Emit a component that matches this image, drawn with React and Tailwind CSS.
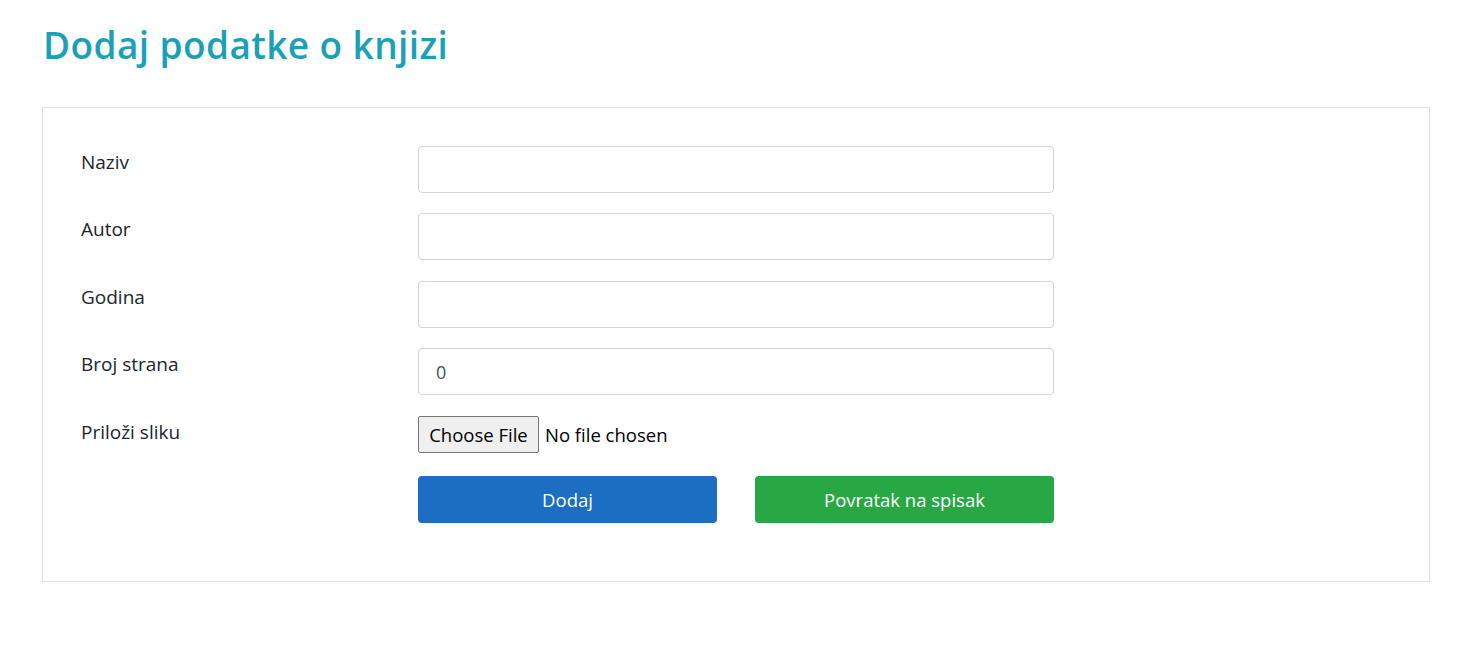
import React from "react";

const font = { fontFamily: '"Open Sans", "Noto Sans", sans-serif' };

function Field({ label, value, className = "" }) {
    return (
        <div className={`flex items-start ${className}`}>
            <label className="w-[337px] pt-[4px] text-[19px] leading-[24px] text-[#212529]">{label}</label>
            <input
                type="text"
                defaultValue={value}
                className="w-[636px] h-[47px] px-[17px] rounded-[4px] border border-[#ced4da] bg-white text-[18px] text-[#495057] outline-none"
            />
        </div>
    );
}

export default function App() {
    return (
        <div className="min-h-screen bg-white px-[42px] pt-[23px]" style={font}>
            <h1 className="text-[37px] leading-[44px] font-semibold text-[#1ba1b7] ml-[1px] tracking-[0.4px]">
                Dodaj podatke o knjizi
            </h1>
            <div className="mt-[40px] w-[1388px] h-[475px] border border-[#dee2e6] pt-[38px] pl-[38px]">
                <div className="flex flex-col">
                    <Field label="Naziv" />
                    <Field label="Autor" className="mt-[20px]" />
                    <Field label="Godina" className="mt-[21px]" />
                    <Field label="Broj strana" value="0" className="mt-[20px]" />
                    <div className="flex items-start mt-[21px]">
                        <label className="w-[337px] pt-[4px] text-[19px] leading-[24px] text-[#212529]">Priloži sliku</label>
                        <div className="flex items-center">
                            <button className="h-[37px] w-[121px] border border-[#767676] rounded-[2px] bg-[#efefef] text-[18.5px] text-black">
                                Choose File
                            </button>
                            <span className="ml-[6px] text-[18.5px] text-black">No file chosen</span>
                        </div>
                    </div>
                    <div className="flex items-start mt-[23px]">
                        <div className="w-[337px]" />
                        <div className="w-[636px] flex justify-between">
                            <button className="w-[299px] h-[47px] rounded-[4px] bg-[#1b6ec2] text-white text-[18.5px]">
                                Dodaj
                            </button>
                            <button className="w-[299px] h-[47px] rounded-[4px] bg-[#28a745] text-white text-[18.5px]">
                                Povratak na spisak
                            </button>
                        </div>
                    </div>
                </div>
            </div>
        </div>
    );
}
